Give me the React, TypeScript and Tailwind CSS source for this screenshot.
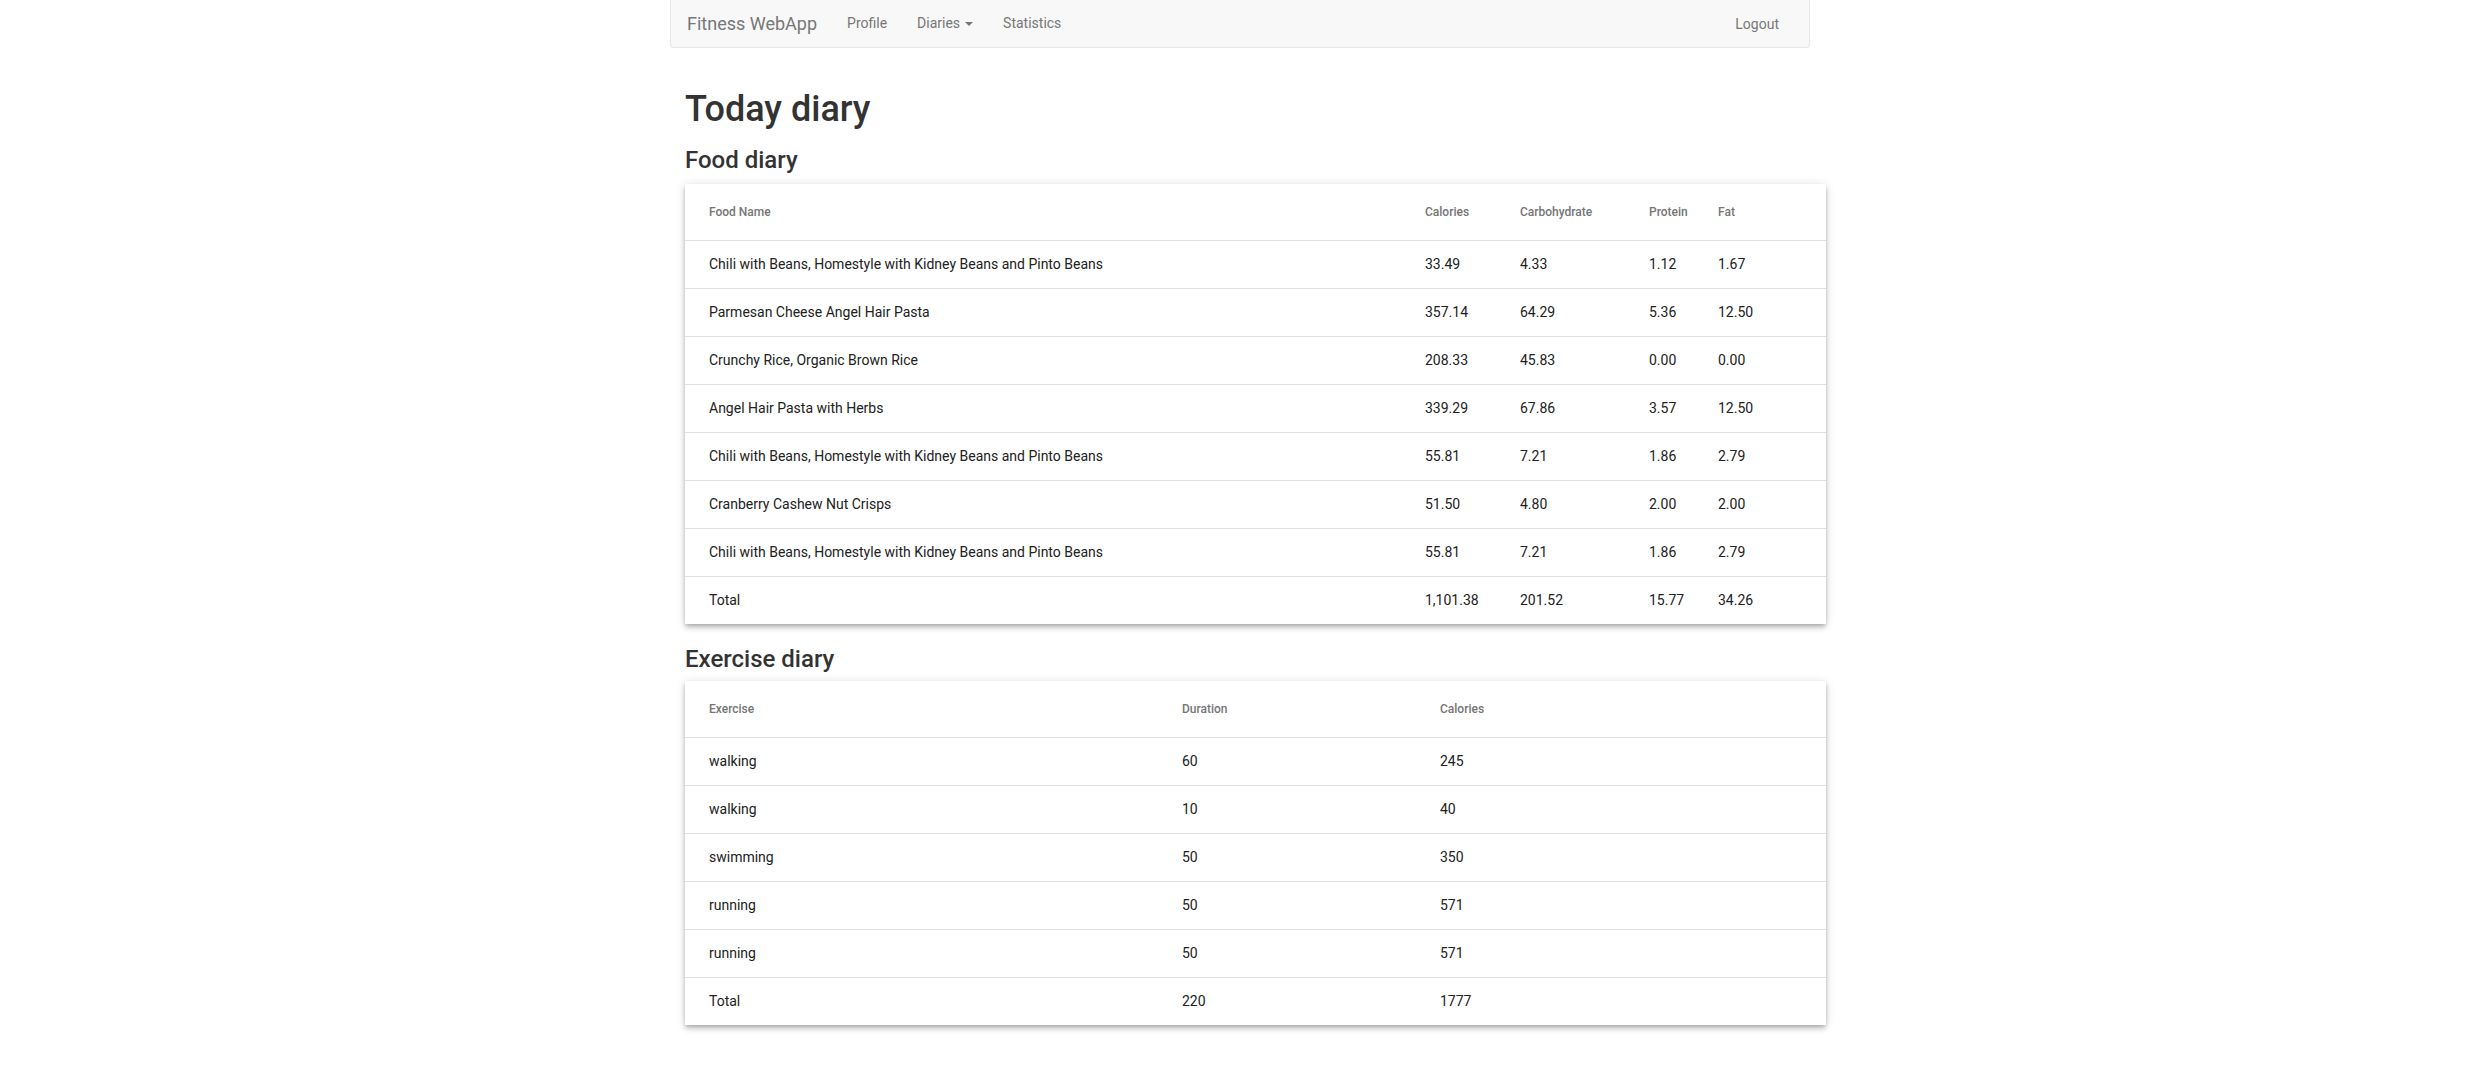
type Row = string[];

const foodRows: Row[] = [
	["Chili with Beans, Homestyle with Kidney Beans and Pinto Beans", "33.49", "4.33", "1.12", "1.67"],
	["Parmesan Cheese Angel Hair Pasta", "357.14", "64.29", "5.36", "12.50"],
	["Crunchy Rice, Organic Brown Rice", "208.33", "45.83", "0.00", "0.00"],
	["Angel Hair Pasta with Herbs", "339.29", "67.86", "3.57", "12.50"],
	["Chili with Beans, Homestyle with Kidney Beans and Pinto Beans", "55.81", "7.21", "1.86", "2.79"],
	["Cranberry Cashew Nut Crisps", "51.50", "4.80", "2.00", "2.00"],
	["Chili with Beans, Homestyle with Kidney Beans and Pinto Beans", "55.81", "7.21", "1.86", "2.79"],
	["Total", "1,101.38", "201.52", "15.77", "34.26"],
];

const exerciseRows: Row[] = [
	["walking", "60", "245"],
	["walking", "10", "40"],
	["swimming", "50", "350"],
	["running", "50", "571"],
	["running", "50", "571"],
	["Total", "220", "1777"],
];

export default function App() {
	return (
		<div className="min-h-[1066px] bg-white font-['Roboto','Liberation_Sans',sans-serif] text-[#333]">
			<div className="mx-auto w-[1140px]">
				<Navbar />
				<div className="ml-[15px] w-[1141px]">
					<h1 className="mt-[41px] h-[40px] text-[36px] leading-[40px] font-medium">
						Today diary
					</h1>
					<h3 className="mt-[18px] mb-[11px] h-[26px] text-[24px] leading-[26px] font-medium">
						Food diary
					</h3>
					<DiaryTable
						cols="grid-cols-[740px_95px_129px_69px_1fr]"
						headers={["Food Name", "Calories", "Carbohydrate", "Protein", "Fat"]}
						rows={foodRows}
					/>
					<h3 className="mt-[22px] mb-[9px] h-[26px] text-[24px] leading-[26px] font-medium">
						Exercise diary
					</h3>
					<DiaryTable
						cols="grid-cols-[497px_258px_1fr]"
						headers={["Exercise", "Duration", "Calories"]}
						rows={exerciseRows}
					/>
				</div>
			</div>
		</div>
	);
}

function Navbar() {
	return (
		<nav className="flex h-12 items-center rounded-b-[4px] border-x border-b border-[#e7e7e7] bg-[#f8f8f8] text-[#777]">
			<a className="pl-[16px] pr-[15px] text-[18px]">Fitness WebApp</a>
			<NavLink>Profile</NavLink>
			<NavLink>
				Diaries
				<span className="ml-[5px] inline-block h-0 w-0 border-x-4 border-t-4 border-x-transparent border-t-[#777] align-middle" />
			</NavLink>
			<NavLink>Statistics</NavLink>
			<div className="ml-auto pr-[15px]">
				<NavLink>Logout</NavLink>
			</div>
		</nav>
	);
}

function NavLink({ children }: { children: React.ReactNode }) {
	return <a className="px-[15px] text-[14px] text-[#777]">{children}</a>;
}

function DiaryTable({
	cols,
	headers,
	rows,
}: {
	cols: string;
	headers: string[];
	rows: Row[];
}) {
	return (
		<div className="bg-white shadow-[0_4px_5px_0_rgba(0,0,0,0.14),0_1px_10px_0_rgba(0,0,0,0.12),0_2px_4px_-1px_rgba(0,0,0,0.2)]">
			<div className={`grid h-14 items-center ${cols}`}>
				{headers.map((h, i) => (
					<div
						key={h}
						className={`text-[12px] font-medium text-[#757575] ${i === 0 ? "pl-6" : ""}`}
					>
						{h}
					</div>
				))}
			</div>
			{rows.map((r, ri) => (
				<div
					key={ri}
					className={`grid h-12 items-center border-t border-[#e0e0e0] ${cols}`}
				>
					{r.map((c, i) => (
						<div
							key={i}
							className={`text-[14px] text-[#212121] ${i === 0 ? "pl-6" : ""}`}
						>
							{c}
						</div>
					))}
				</div>
			))}
		</div>
	);
}
